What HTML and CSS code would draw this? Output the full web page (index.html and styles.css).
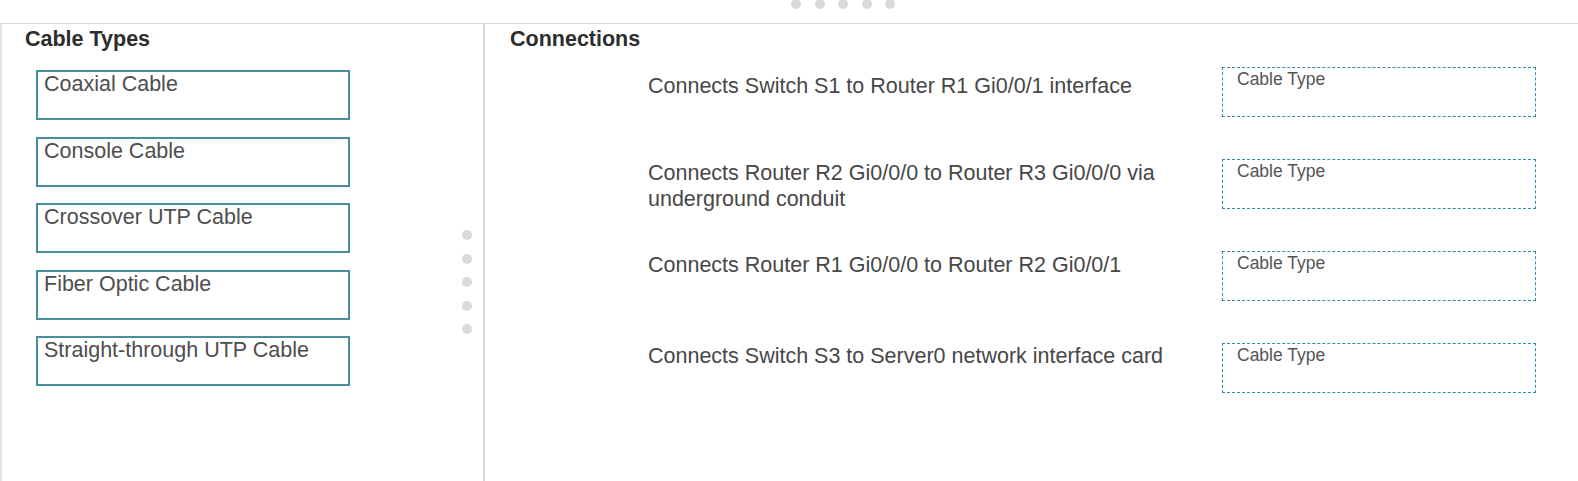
FILE: index.html
```html
<!DOCTYPE html>
<html lang="en">
<head>
<meta charset="utf-8">
<title>Cable Types</title>
<link rel="stylesheet" href="styles.css">
</head>
<body>
<div class="page">
  <div class="topbar">
    <div class="hdots">
      <span class="dot"></span><span class="dot"></span><span class="dot"></span><span class="dot"></span><span class="dot"></span>
    </div>
  </div>
  <div class="main">
    <section class="left">
      <div class="cable-col">
        <h2 class="heading">Cable Types</h2>
        <ul class="cables">
          <li class="cable">Coaxial Cable</li>
          <li class="cable">Console Cable</li>
          <li class="cable">Crossover UTP Cable</li>
          <li class="cable">Fiber Optic Cable</li>
          <li class="cable">Straight-through UTP Cable</li>
        </ul>
      </div>
      <div class="grip">
        <span class="dot"></span><span class="dot"></span><span class="dot"></span><span class="dot"></span><span class="dot"></span>
      </div>
    </section>
    <section class="right">
      <h2 class="heading heading--right">Connections</h2>
      <div class="rows">
        <div class="row">
          <p class="desc desc--low">Connects Switch S1 to Router R1 Gi0/0/1 interface</p>
          <div class="target">Cable Type</div>
        </div>
        <div class="row">
          <p class="desc desc--mid">Connects Router R2 Gi0/0/0 to Router R3 Gi0/0/0 via underground conduit</p>
          <div class="target">Cable Type</div>
        </div>
        <div class="row">
          <p class="desc desc--mid">Connects Router R1 Gi0/0/0 to Router R2 Gi0/0/1</p>
          <div class="target">Cable Type</div>
        </div>
        <div class="row">
          <p class="desc">Connects Switch S3 to Server0 network interface card</p>
          <div class="target">Cable Type</div>
        </div>
      </div>
    </section>
  </div>
</div>
</body>
</html>
```
FILE: styles.css
```css
* { box-sizing: border-box; }

html, body {
  margin: 0;
  padding: 0;
  background: #ffffff;
}

body {
  font-family: "Liberation Sans", Arial, sans-serif;
  color: #444444;
  overflow: hidden;
}

.page {
  width: 1578px;
  height: 481px;
  display: flex;
  flex-direction: column;
}

.topbar {
  height: 24px;
  border-bottom: 1px solid #d9d9d9;
  flex: none;
}

.hdots {
  display: flex;
  gap: 13.5px;
  padding-left: 791px;
  margin-top: -1px;
}

.dot {
  display: block;
  width: 10px;
  height: 10px;
  border-radius: 50%;
  background: #dadada;
}

.main {
  flex: 1;
  display: flex;
  min-height: 0;
}

.left {
  width: 485px;
  flex: none;
  border-left: 2px solid #e3e3e3;
  border-right: 2px solid #d9d9d9;
  display: flex;
}

.cable-col {
  flex: 1;
  padding: 3px 0 0 23px;
}

.heading {
  margin: 0;
  font-size: 21.5px;
  line-height: 25px;
  font-weight: bold;
  color: #2d2d2d;
}

.cables {
  list-style: none;
  margin: 18px 0 0 11px;
  padding: 0;
  display: flex;
  flex-direction: column;
  gap: 16.5px;
}

.cable {
  width: 314px;
  height: 50px;
  border: 2px solid #4a8e9d;
  padding: 1px 0 0 6px;
  font-size: 21.5px;
  line-height: 22px;
  color: #4e4e4e;
  background: #ffffff;
  box-shadow: 0 0 1px rgba(120, 210, 230, 0.35);
}

.grip {
  display: flex;
  flex-direction: column;
  gap: 13.5px;
  margin: 206px 11px 0 0;
  align-self: flex-start;
}

.right {
  flex: 1;
  padding: 3px 0 0 25px;
}

.rows {
  margin: 15px 0 0 138px;
  display: grid;
  grid-auto-rows: 50px;
  row-gap: 42px;
}

.row {
  display: flex;
  align-items: flex-start;
}

.desc {
  width: 574px;
  flex: none;
  margin: 0;
  padding-right: 40px;
  font-size: 21.5px;
  line-height: 26px;
  color: #474747;
}

.desc--low {
  padding-top: 6px;
}

.desc--mid {
  padding-top: 1px;
}

.target {
  width: 314px;
  height: 50px;
  flex: none;
  border: 1px dashed #2a8fb1;
  padding: 2px 0 0 14px;
  font-size: 17.5px;
  line-height: 19px;
  color: #555555;
}
```
